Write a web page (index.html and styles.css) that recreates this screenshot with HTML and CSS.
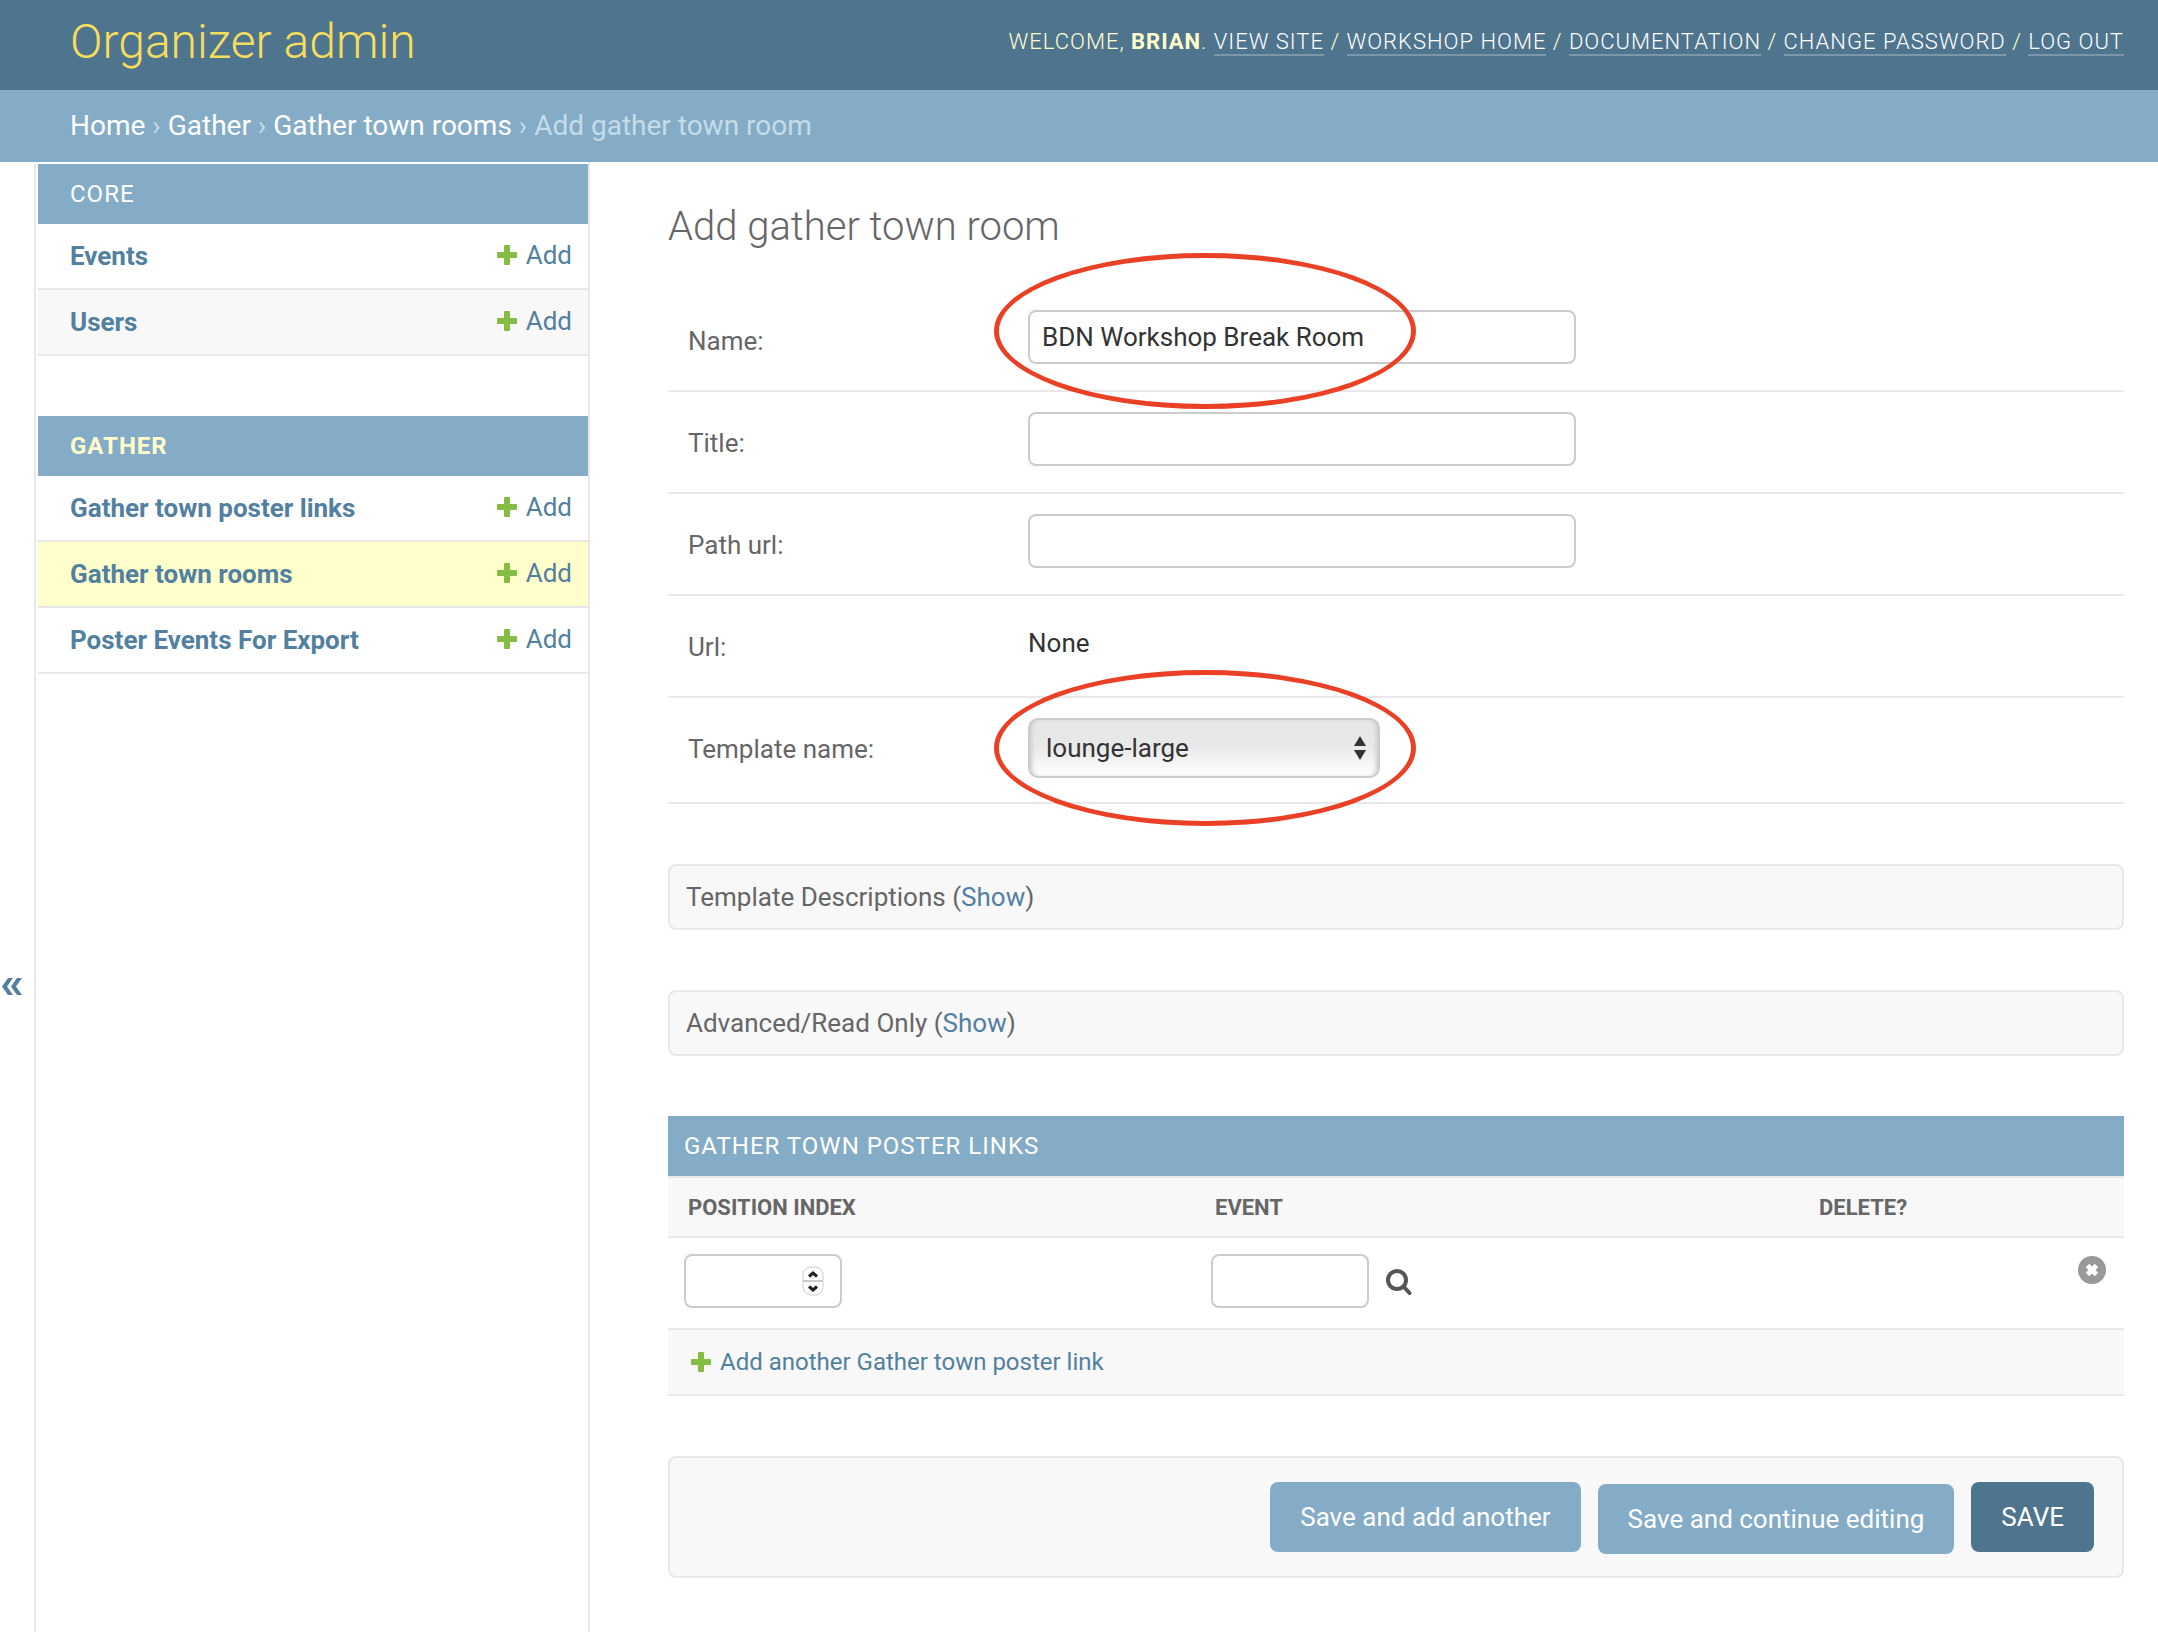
FILE: index.html
```html
<!DOCTYPE html>
<html lang="en">
<head>
<meta charset="utf-8">
<title>Add gather town room | Organizer admin</title>
<link rel="stylesheet" href="styles.css">
</head>
<body>
<svg class="sprite" aria-hidden="true">
  <symbol id="plus" viewBox="0 0 20 20"><path d="M8 0h4q1 0 1 1v6h6q1 0 1 1v4q0 1-1 1h-6v6q0 1-1 1H8q-1 0-1-1v-6H1q-1 0-1-1V8q0-1 1-1h6V1q0-1 1-1z"/></symbol>
</svg>
<header class="header">
  <h1 class="brand"><a href="#">Organizer admin</a></h1>
  <nav class="user-tools">
    Welcome, <strong>Brian</strong>.
    <a href="#">View site</a> /
    <a href="#">Workshop Home</a> /
    <a href="#">Documentation</a> /
    <a href="#">Change password</a> /
    <a href="#">Log out</a>
  </nav>
</header>
<nav class="breadcrumbs">
  <a href="#">Home</a> › <a href="#">Gather</a> › <a href="#">Gather town rooms</a> › Add gather town room
</nav>
<div class="main">
  <button class="toggle" aria-label="Toggle navigation"><svg viewBox="0 0 20 17" width="20" height="17"><path d="M0 8.500 6 0h5L5 8.500 11 17H6zM9 8.500 15 0h5l-6 8.500 6 8.500h-5z"/></svg></button>
  <nav class="sidebar">
    <table class="app">
      <caption><a href="#">Core</a></caption>
      <tbody>
      <tr><th><a href="#">Events</a></th><td><a class="add" href="#"><svg><use href="#plus"/></svg>Add</a></td></tr>
      <tr><th><a href="#">Users</a></th><td><a class="add" href="#"><svg><use href="#plus"/></svg>Add</a></td></tr>
      </tbody>
    </table>
    <table class="app current-app">
      <caption><a href="#">Gather</a></caption>
      <tbody>
      <tr><th><a href="#">Gather town poster links</a></th><td><a class="add" href="#"><svg><use href="#plus"/></svg>Add</a></td></tr>
      <tr class="current"><th><a href="#">Gather town rooms</a></th><td><a class="add" href="#"><svg><use href="#plus"/></svg>Add</a></td></tr>
      <tr><th><a href="#">Poster Events For Export</a></th><td><a class="add" href="#"><svg><use href="#plus"/></svg>Add</a></td></tr>
      </tbody>
    </table>
  </nav>
  <main class="content">
    <h2 class="title">Add gather town room</h2>
    <form>
      <div class="row">
        <label for="name">Name:</label>
        <div class="field marked"><input class="text" id="name" type="text" value="BDN Workshop Break Room"></div>
      </div>
      <div class="row">
        <label for="title">Title:</label>
        <div class="field"><input class="text" id="title" type="text"></div>
      </div>
      <div class="row">
        <label for="path">Path url:</label>
        <div class="field"><input class="text" id="path" type="text"></div>
      </div>
      <div class="row">
        <span class="label">Url:</span>
        <div class="field readonly">None</div>
      </div>
      <div class="row">
        <label for="template">Template name:</label>
        <div class="field choice marked">
          <select id="template"><option>lounge-large</option></select>
          <svg class="arrows" viewBox="0 0 12 24" aria-hidden="true"><path d="M6 0l6 10H0zM6 24l6-10H0z"/></svg>
        </div>
      </div>
      <section class="collapsed">Template Descriptions (<a href="#">Show</a>)</section>
      <section class="collapsed">Advanced/Read Only (<a href="#">Show</a>)</section>
      <section class="inline">
        <h2>Gather town poster links</h2>
        <table>
          <thead><tr><th class="col-index">Position index</th><th class="col-event">Event</th><th>Delete?</th></tr></thead>
          <tbody>
          <tr>
            <td><div class="number"><input class="small" type="number" aria-label="Position index"><svg class="stepper" viewBox="0 0 22 30" aria-hidden="true"><rect x="1" y="1" width="20" height="28" rx="8"/><path class="rule" d="M1 15h20"/><path class="chev" d="M7 10.500 11 7l4 3.500M7 20.500 11 24l4-3.500"/></svg></div></td>
            <td><div class="lookup"><input class="small" type="text" aria-label="Event"><a href="#" aria-label="Lookup"><svg viewBox="0 0 28 28" width="28" height="28"><circle cx="12" cy="13" r="9"/><path d="M18.500 19.500 24.500 26"/></svg></a></div></td>
            <td class="delete"><button type="button" aria-label="Remove"><svg viewBox="0 0 28 28" width="28" height="28"><circle cx="14" cy="14" r="14"/><path d="M9.500 9.500l9 9M18.500 9.500l-9 9"/></svg></button></td>
          </tr>
          <tr class="add-row"><td colspan="3"><a class="add" href="#"><svg><use href="#plus"/></svg>Add another Gather town poster link</a></td></tr>
          </tbody>
        </table>
      </section>
      <div class="submit-row">
        <button type="button">Save and add another</button>
        <button type="button" class="continue">Save and continue editing</button>
        <button type="button" class="save">Save</button>
      </div>
    </form>
  </main>
</div>
</body>
</html>
```
FILE: styles.css
```css
*, *::after { box-sizing: border-box; }
body {
  margin: 0;
  min-height: 100vh;
  display: flex;
  flex-direction: column;
  background: #fff;
  color: #333;
  font: 26px/32px Roboto, "Liberation Sans", sans-serif;
}
a { color: #5280a0; text-decoration: none; }
button, input, select { font: inherit; margin: 0; }
.sprite { position: absolute; width: 0; height: 0; }

.header {
  display: flex;
  justify-content: space-between;
  align-items: center;
  height: 90px;
  padding: 0 34px 6px 70px;
  background: #4f748e;
  color: #ffffcc;
}
.brand { margin: 0; font-size: 48px; line-height: 56px; font-weight: 300; }
.brand a { color: #f5dd5d; }
.user-tools { font-size: 22px; font-weight: 300; letter-spacing: 1px; text-transform: uppercase; }
.user-tools a { color: #fff; border-bottom: 2px solid #7b98ab; }
.user-tools strong { font-weight: 700; }

.breadcrumbs { padding: 20px 70px; background: #85acc6; color: #c4dce8; font-size: 28px; }
.breadcrumbs a { color: #fff; }

.main { flex: 1; display: flex; }
.toggle {
  width: 36px;
  margin-top: 2px;
  padding: 176px 0 0 2px;
  border: 0;
  border-right: 2px solid #e8e8e8;
  background: #fff;
}
.toggle svg { display: block; fill: #5280a0; }
.sidebar {
  width: 554px;
  flex: none;
  padding: 2px 0 0 2px;
  border-right: 2px solid #e8e8e8;
}
.app { width: 100%; margin-bottom: 60px; border-spacing: 0; }
.app caption {
  padding: 14px 32px;
  background: #85acc6;
  text-align: left;
  font-size: 24px;
  letter-spacing: 1px;
  text-transform: uppercase;
}
.app caption a { color: #fff; }
.current-app caption { font-weight: 700; }
.current-app caption a { color: #ffffcc; }
.app tr:nth-child(even) { background: #f8f8f8; }
.app tr.current { background: #ffffcc; }
.app th, .app td { height: 66px; border-bottom: 2px solid #e8e8e8; }
.app th { padding: 0 32px; text-align: left; font-weight: 700; }
.app td { padding: 0 16px 2px; }
.add { display: flex; justify-content: flex-end; align-items: center; gap: 9px; }
.add svg { width: 20px; height: 20px; fill: #84bd41; }

.content { flex: 1; padding: 41px 34px 40px 78px; }
.title { margin: 0 0 39px; color: #666; font-size: 40px; line-height: 48px; font-weight: 300; }
.row { display: flex; align-items: flex-start; padding: 20px; border-bottom: 2px solid #e8e8e8; }
.row label, .row .label { width: 340px; padding-top: 15px; color: #666; }
.field { position: relative; min-height: 60px; }
.choice { min-height: 64px; }
.readonly { padding-top: 11px; }
.text, .small {
  display: block;
  width: 548px;
  height: 54px;
  padding: 0 12px;
  border: 2px solid #ccc;
  border-radius: 8px;
  background: #fff;
  color: #333;
}
.small { width: 158px; }
.small::-webkit-inner-spin-button { display: none; }
select {
  display: block;
  width: 352px;
  height: 60px;
  padding: 0 16px;
  appearance: none;
  border: 2px solid #ccc;
  border-radius: 10px;
  background: linear-gradient(#e6e6e6, #e9e9e9 50%, #fff);
  box-shadow: inset 4px 0 4px -2px #ccc, inset -4px 0 4px -2px #ccc;
  color: #333;
}
.arrows { position: absolute; right: 14px; top: 18px; width: 12px; height: 24px; fill: #333; }
/* Red ring that draws the eye to the field */
.marked::after {
  content: "";
  position: absolute;
  z-index: 1;
  left: -34px;
  top: -57px;
  width: 422px;
  height: 156px;
  border: 5px solid #ea4025;
  border-radius: 50%;
  pointer-events: none;
}
.choice.marked::after { top: -48px; }

.collapsed {
  margin-top: 60px;
  padding: 15px 16px;
  border: 2px solid #e8e8e8;
  border-radius: 8px;
  background: #f8f8f8;
  color: #666;
}
.inline { margin-top: 60px; }
.inline h2 {
  margin: 0;
  padding: 14px 16px;
  background: #85acc6;
  color: #fff;
  font-size: 24px;
  font-weight: 400;
  letter-spacing: 1px;
  text-transform: uppercase;
}
.inline table { width: 100%; border-collapse: collapse; }
.inline th {
  padding: 14px 20px 12px;
  border-top: 2px solid #e8e8e8;
  background: #f8f8f8;
  color: #666;
  text-align: left;
  font-size: 22px;
  text-transform: uppercase;
}
.col-index { width: 527px; }
.col-event { width: 604px; }
.inline tr { border-bottom: 2px solid #e8e8e8; }
.inline td { padding: 16px 16px 20px; vertical-align: top; }
.number { position: relative; width: 158px; }
.stepper { position: absolute; right: 18px; top: 12px; width: 22px; height: 30px; fill: #fff; stroke: #ccc; }
.stepper .rule { stroke-width: 2; }
.stepper .chev { fill: none; stroke: #222; stroke-width: 3; }
.lookup { display: flex; align-items: center; gap: 16px; }
.lookup svg { display: block; fill: none; stroke: #555; stroke-width: 4; stroke-linecap: round; }
.delete button { display: block; margin: 2px 2px 0 auto; padding: 0; border: 0; background: none; }
.delete svg { display: block; fill: #999; stroke: #fff; stroke-width: 5; }
.delete circle { stroke: none; }
.inline .add-row { background: #f8f8f8; }
.inline .add-row td { padding: 16px 23px; }
.add-row .add { justify-content: flex-start; font-size: 24px; }

.submit-row {
  display: flex;
  justify-content: flex-end;
  align-items: flex-start;
  gap: 17px;
  margin-top: 60px;
  padding: 24px 28px 22px;
  border: 2px solid #e8e8e8;
  border-radius: 8px;
  background: #f8f8f8;
}
.submit-row button { height: 70px; padding: 0 30px; border: 0; border-radius: 8px; background: #85acc6; color: #fff; }
.submit-row .continue { margin-top: 2px; }
.submit-row .save { background: #4f748e; text-transform: uppercase; }
```
